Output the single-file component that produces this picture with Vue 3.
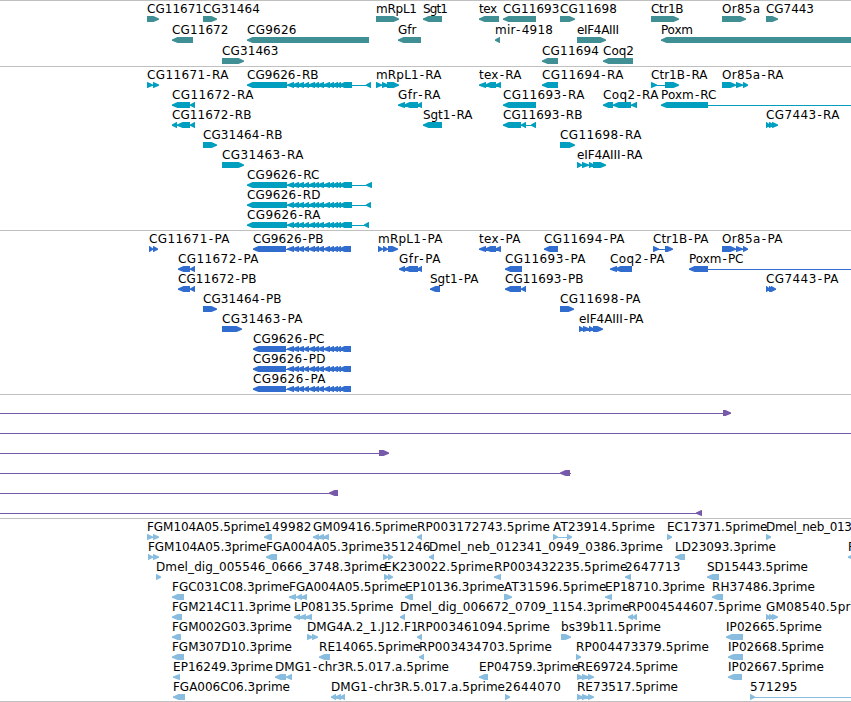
<script setup>
// Feature: [row, direction, label, label end, blocks as "start-end" pairs, optional line extent]
const exons = '287-294 292-299 297-304 303-309 308-315 313-319 317-324 323-330 328-334 332-338 336-341'
const source = [
  {
    name: 'genes', pitch: 21, height: 66, features: [
      [0, '>', 'CG11671', 203, '147-159'],
      [0, '>', 'CG31464', 260, '203-217'],
      [1, '<', 'CG11672', 228.5, '172-193'],
      [1, '<', 'CG9626', 296.5, '247-369'],
      [2, '>', 'CG31463', 278.5, '222-244'],
      [0, '>', 'mRpL1', 417, '376-399'],
      [1, '<', 'Gfr', 416.5, '398-421'],
      [0, '<', 'Sgt1', 448, '423-442'],
      [0, '<', 'tex', 497, '479-499'],
      [0, '<', 'CG11693', 559.5, '503-536'],
      [1, '<', 'mir-4918', 553, '495-500'],
      [0, '>', 'CG11698', 617, '560-575'],
      [1, '>', 'eIF4AIII', 619, '577-606'],
      [2, '<', 'CG11694', 599, '542-558'],
      [2, '<', 'Coq2', 634, '603-633'],
      [0, '>', 'Ctr1B', 683.5, '651-679'],
      [0, '>', 'Or85a', 760, '722-746'],
      [0, '>', 'CG7443', 814, '766-778'],
      [1, '<', 'Poxm', 693, '661-860']
    ]
  },
  {
    name: 'transcripts', pitch: 20, height: 164, features: [
      [0, '>', 'CG11671-RA', 228.5, '147-153 153-159'],
      [1, '<', 'CG11672-RA', 253.5, '172-190 190-195'],
      [2, '<', 'CG11672-RB', 251.5, '172-177 177-190 190-195'],
      [3, '>', 'CG31464-RB', 282.5, '203-217'],
      [4, '>', 'CG31463-RA', 303.5, '222-244'],
      [0, '<', 'CG9626-RB', 318.5, `247-287 ${exons} 339-352 366-371`],
      [5, '<', 'CG9626-RC', 319.5, `247-287 ${exons} 339-352 366-372`],
      [6, '<', 'CG9626-RD', 320.5, `247-287 ${exons} 339-352 366-371`],
      [7, '<', 'CG9626-RA', 320.5, `247-287 ${exons} 339-352 364-369`],
      [0, '>', 'mRpL1-RA', 441.5, '376-382 382-388 387-399'],
      [1, '<', 'Gfr-RA', 440.5, '398-405 404-418 417-422'],
      [2, '<', 'Sgt1-RA', 472.5, '423-442'],
      [0, '<', 'tex-RA', 521.5, '479-486 485-496 495-501'],
      [0, '<', 'CG11694-RA', 623.5, '542-558'],
      [1, '<', 'CG11693-RA', 584.5, '503-536'],
      [2, '<', 'CG11693-RB', 582.5, '503-521 521-526 531-536'],
      [3, '>', 'CG11698-RA', 641.5, '560-575'],
      [4, '>', 'eIF4AIII-RA', 642.5, '577-582 582-589 589-594 593-606'],
      [1, '<', 'Coq2-RA', 658.5, '603-613 613-631 631-637'],
      [0, '>', 'Ctr1B-RA', 707.5, '651-657 665-679'],
      [1, '<', 'Poxm-RC', 716.5, '661-708', '661-860'],
      [0, '>', 'Or85a-RA', 783.5, '722-736 736-743 743-748'],
      [2, '>', 'CG7443-RA', 839.5, '766-770 769-774 772-778']
    ]
  },
  {
    name: 'proteins', pitch: 20, height: 164, features: [
      [0, '>', 'CG11671-PA', 229.5, '149-153 153-158'],
      [1, '<', 'CG11672-PA', 258.5, '178-190 190-195'],
      [2, '<', 'CG11672-PB', 256.5, '178-190 190-195'],
      [3, '>', 'CG31464-PB', 281.5, '203-217'],
      [4, '>', 'CG31463-PA', 302.5, '222-242'],
      [0, '<', 'CG9626-PB', 323.5, `253-286 ${exons} 339-351`],
      [5, '<', 'CG9626-PC', 324.5, `253-286 ${exons} 339-351`],
      [6, '<', 'CG9626-PD', 325.5, `253-286 ${exons} 339-351`],
      [7, '<', 'CG9626-PA', 325.5, `253-286 ${exons} 339-351`],
      [0, '>', 'mRpL1-PA', 442.5, '378-383 383-388 388-398'],
      [1, '<', 'Gfr-PA', 440.5, '399-405 404-418 417-422'],
      [2, '<', 'Sgt1-PA', 478.5, '430-440'],
      [0, '<', 'tex-PA', 520.5, '479-486 485-496 495-501'],
      [0, '<', 'CG11694-PA', 624.5, '544-558'],
      [1, '<', 'CG11693-PA', 585.5, '505-522'],
      [2, '<', 'CG11693-PB', 583.5, '505-521 521-526'],
      [3, '>', 'CG11698-PA', 640.5, '560-574'],
      [4, '>', 'eIF4AIII-PA', 643.5, '579-584 583-590 589-594 593-603'],
      [1, '<', 'Coq2-PA', 664.5, '610-617 615-632'],
      [0, '>', 'Ctr1B-PA', 708.5, '653-659 665-673'],
      [0, '>', 'Or85a-PA', 782.5, '722-736 736-743 743-748'],
      [1, '<', 'Poxm-PC', 743.5, '689-708', '689-860'],
      [2, '>', 'CG7443-PA', 838.5, '766-770 769-773 771-776']
    ]
  },
  {
    name: 'insertions', pitch: 20, height: 124, features: [
      [0, '>', '', 0, '723-731', '0-731'],
      [1, '>', '', 0, '', '0-860'],
      [2, '>', '', 0, '379-389', '0-389'],
      [3, '<', '', 0, '560-570', '0-571'],
      [4, '<', '', 0, '329-338', '0-338'],
      [5, '<', '', 0, '696-702', '0-702']
    ]
  },
  {
    name: 'ests', pitch: 20, height: 183, features: [
      [0, '>', 'FGM104A05.5prime', 265.5, '147-153 153-159'],
      [0, '<', '149982', 311.5, '264-272'],
      [0, '<', 'GM09416.5prime', 417.5, '313-319 318-324 323-329'],
      [0, '<', 'RP003172743.5prime', 550, '417-422'],
      [0, '>', 'AT23914.5prime', 655, '553-558 567-572'],
      [0, '>', 'EC17371.5prime', 767.5, '667-672'],
      [0, '>', 'Dmel_neb_013', 852, '766-771'],
      [1, '>', 'FGM104A05.3prime', 266.5, '148-153 153-159'],
      [1, '<', 'FGA004A05.3prime', 383.5, '266-277'],
      [1, '>', '351246', 430.5, '383-388 388-393'],
      [1, '<', 'Dmel_neb_012341_0949_0386.3prime', 663, '429-434'],
      [1, '<', 'LD23093.3prime', 776, '675-685'],
      [1, '<', 'F', 855, '848-858'],
      [2, '>', 'Dmel_dig_005546_0666_3748.3prime', 386.5, '156-161'],
      [2, '>', 'EK230022.5prime', 493.5, '384-389 388-393'],
      [2, '<', 'RP003432235.5prime', 627.5, '494-501'],
      [2, '<', '2647713', 680.5, '625-631'],
      [2, '<', 'SD15443.5prime', 808, '707-719'],
      [3, '<', 'FGC031C08.3prime', 289.5, '172-184'],
      [3, '<', 'FGA004A05.5prime', 406.5, '289-296 296-302 301-307'],
      [3, '<', 'EP10136.3prime', 504.5, '405-413'],
      [3, '>', 'AT31596.5prime', 606.5, '504-512'],
      [3, '<', 'EP18710.3prime', 705, '605-612'],
      [3, '<', 'RH37486.3prime', 815, '712-723'],
      [4, '<', 'FGM214C11.3prime', 291, '172-182'],
      [4, '<', 'LP08135.5prime', 393.5, '294-300 299-306 305-312'],
      [4, '<', 'Dmel_dig_006672_0709_1154.3prime', 629.5, '400-405'],
      [4, '<', 'RP004544607.5prime', 761.5, '628-633 632-637'],
      [4, '>', 'GM08540.5pr', 850.5, '766-770 769-774 772-778'],
      [5, '<', 'FGM002G03.3prime', 292, '172-181'],
      [5, '>', 'DMG4A.2_1.J12.F1', 418.5, '307-313 312-318'],
      [5, '<', 'RP003461094.5prime', 550, '417-422'],
      [5, '>', 'bs39b11.5prime', 661, '561-571'],
      [5, '<', 'IP02665.5prime', 822, '726-743'],
      [6, '<', 'FGM307D10.3prime', 292, '172-184'],
      [6, '<', 'RE14065.5prime', 420.5, '319-330'],
      [6, '<', 'RP003434703.5prime', 552, '419-424'],
      [6, '>', 'RP004473379.5prime', 709, '576-581'],
      [6, '<', 'IP02668.5prime', 824, '728-743'],
      [7, '<', 'EP16249.3prime', 273, '173-180'],
      [7, '<', 'DMG1-chr3R.5.017.a.5prime', 449, '275-286 286-292'],
      [7, '<', 'EP04759.3prime', 579, '479-488'],
      [7, '>', 'RE69724.5prime', 678, '577-583 582-589 588-594'],
      [7, '<', 'IP02667.5prime', 824, '728-742'],
      [8, '<', 'FGA006C06.3prime', 290, '173-185'],
      [8, '<', 'DMG1-chr3R.5.017.a.5prime', 505, '331-336 335-341 340-345'],
      [8, '>', '2644070', 561, '505-510'],
      [8, '>', 'RE73517.5prime', 678, '577-583 582-589 588-594'],
      [8, '>', '571295', 797.5, '750-755', '750-860']
    ]
  }
]

const span = (s) => s.split('-').map(Number)

// A block is a bar with a pointed end; short blocks are all point.
function arrow([a, b], dir, y) {
  const w = b - a
  const head = w <= 7 ? w - 0.5 : 5.5
  const [tip, neck, tail] = dir === '>' ? [b, b - head, a] : [a, a + head, b]
  return `M${tail} ${y}H${neck}L${tip} ${y + 2.4}V${y + 3.8}L${neck} ${y + 6}H${tail}Z`
}

const tracks = source.map((t) => ({
  ...t,
  features: t.features.map(([row, dir, label, end, parts, extent]) => {
    const top = row * t.pitch
    const blocks = parts ? parts.split(' ').map(span) : []
    const line = extent ? span(extent) : [blocks[0][0], blocks[blocks.length - 1][1]]
    return {
      label,
      x: line[0],
      baseline: top + 13,
      // Room on both sides of a hyphen; the fitted length spreads over the rest.
      shifts: label.includes('-')
        ? [...label].map((c, i) => (c === '-' || label[i - 1] === '-' ? 1 : 0)).join(' ')
        : null,
      length: end - line[0],
      lineY: top + 19,
      lineWidth: line[1] - line[0] - (extent ? 0 : 2),
      path: blocks.map((b) => arrow(b, dir, top + 16)).join('')
    }
  })
}))
</script>

<template>
  <main class="browser">
    <section v-for="t in tracks" :key="t.name" class="track" :class="t.name">
      <svg class="canvas" width="851" :height="t.height" :viewBox="`0 0 851 ${t.height}`">
        <rect class="rule" x="0" y="0" width="851" height="1" />
        <g v-for="(f, i) in t.features" :key="i">
          <rect class="glyph" :x="f.x" :y="f.lineY" :width="f.lineWidth" height="1" />
          <path class="glyph" :d="f.path" />
          <text v-if="f.label" class="label" :x="f.x" :y="f.baseline" :dx="f.shifts" :textLength="f.length">{{ f.label }}</text>
        </g>
      </svg>
    </section>
    <div class="bottom-rule"></div>
  </main>
</template>

<style>
body {
  margin: 0;
  background: #fff;
}
</style>

<style scoped>
.browser {
  display: flex;
  flex-direction: column;
  width: 851px;
  height: 702px;
  overflow: hidden;
  background: #fff;
}
.canvas {
  display: block;
  overflow: hidden;
}
.rule {
  fill: #c0c0c0;
}
.bottom-rule {
  height: 1px;
  background: #c0c0c0;
}
.label {
  font-family: "DejaVu Sans", sans-serif;
  font-size: 12px;
  fill: #000;
}
.genes .glyph { fill: #408f94; }
.transcripts .glyph { fill: #009fc0; }
.proteins .glyph { fill: #316dce; }
.insertions .glyph { fill: #7659aa; }
.ests .glyph { fill: #88bddf; }
</style>
